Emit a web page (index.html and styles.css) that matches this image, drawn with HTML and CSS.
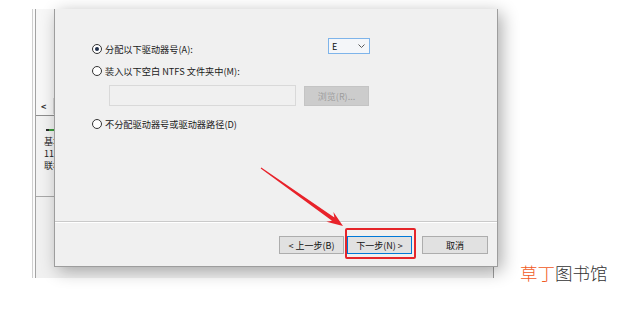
FILE: index.html
```html
<!DOCTYPE html>
<html lang="zh-CN">
<head>
<meta charset="utf-8">
<title>新建简单卷向导</title>
<link rel="stylesheet" href="styles.css">
</head>
<body>
<div class="page">
  <div class="bgwin">
    <div class="bg-inner">
      <div class="bg-top">
        <div class="bg-scroll"><span class="bg-arrow">&lt;</span><span class="bg-thumb"></span></div>
      </div>
      <div class="bg-disk">
        <div class="bg-dash"></div>
        <div class="bg-text">基本<br>11<br>联机</div>
      </div>
      <div class="bg-rest"></div>
    </div>
  </div>

  <div class="dialog">
    <div class="form">
      <div class="row row-first">
        <label class="opt opt-wide"><span class="radio checked"></span><span>分配以下驱动器号(A):</span></label>
        <div class="select"><span>E</span><svg class="chev" width="7" height="4" viewBox="0 0 7 4"><path d="M0.5 0.5 L3.5 3.5 L6.5 0.5" fill="none" stroke="#5a5a5a" stroke-width="1"/></svg></div>
      </div>
      <div class="row row-second">
        <label class="opt"><span class="radio"></span><span>装入以下空白 NTFS 文件夹中(M):</span></label>
      </div>
      <div class="row row-field">
        <div class="field"></div>
        <div class="browse">浏览(R)...</div>
      </div>
      <div class="row row-third">
        <label class="opt"><span class="radio"></span><span>不分配驱动器号或驱动器路径(D)</span></label>
      </div>
    </div>
    <div class="footer">
      <div class="btn btn-back">&lt; 上一步(B)</div>
      <div class="btn btn-next">下一步(N) &gt;</div>
      <div class="btn btn-cancel">取消</div>
    </div>
  </div>

  <svg class="arrow" width="620" height="309" viewBox="0 0 620 309">
    <polygon points="261.3,167.6 334.4,217.5 333.4,211.9 343,226 326.4,221.7 332,220.7 260.7,168.4" fill="#e8222a"/>
  </svg>
  <div class="highlight"></div>
  <div class="watermark"><span class="wm-orange">草丁</span>图书馆</div>
</div>
</body>
</html>
```

FILE: styles.css
```css
html, body {
  margin: 0;
  padding: 0;
  background: #ffffff;
}

.page {
  position: relative;
  width: 620px;
  height: 309px;
  padding-top: 9px;
  box-sizing: border-box;
  overflow: hidden;
  font-family: "Noto Sans CJK SC", "Noto Sans", sans-serif;
  font-size: 9px;
  color: #1a1a1a;
}

/* background window */
.bgwin {
  margin-left: 32px;
  width: 462px;
  height: 269px;
  box-sizing: border-box;
  border-left: 1px solid #cfcfcf;
  border-right: 1px solid #9c9c9c;
  padding-left: 2px;
  background: #fbfbfb;
}

.bg-inner {
  height: 100%;
  border-left: 1px solid #a3a3a3;
  background: #f0f0f0;
  display: flex;
  flex-direction: column;
}

.bg-top {
  height: 106px;
  display: flex;
  flex-direction: column;
  justify-content: flex-end;
  border-bottom: 1px solid #8e8e8e;
  background: #f7f7f7;
}

.bg-scroll {
  height: 18px;
  display: flex;
  align-items: center;
  padding-left: 5px;
}

.bg-arrow {
  font-size: 9px;
  font-weight: bold;
  color: #333;
  width: 7px;
}

.bg-thumb {
  margin-left: 5px;
  width: 12px;
  height: 16px;
  background: #d6d6d6;
}

.bg-disk {
  height: 81px;
  padding: 13px 0 0 8px;
  box-sizing: border-box;
  border-bottom: 1px solid #a8a8a8;
  background: #f2f2f2;
}

.bg-dash {
  width: 12px;
  height: 2px;
  margin-left: 2px;
  background: linear-gradient(90deg, #2b2b2b 0 3px, #3a9a3a 3px);
}

.bg-text {
  margin-top: 5px;
  font-size: 9px;
  line-height: 12px;
  color: #222;
}

.bg-rest {
  flex: 1;
  background: #f0f0f0;
}

/* dialog */
.dialog {
  position: absolute;
  left: 54px;
  top: 9px;
  width: 444px;
  height: 258px;
  box-sizing: border-box;
  background: #f0f0f0;
  border: 1px solid #9d9d9d;
  border-top: none;
  box-shadow: 4px 4px 16px rgba(0, 0, 0, 0.32);
  display: flex;
  flex-direction: column;
}

.form {
  height: 213px;
  box-sizing: border-box;
  padding: 29px 0 0 37px;
  border-bottom: 1px solid #cacaca;
  display: flex;
  flex-direction: column;
}

.row {
  display: flex;
}

.row-first {
  height: 16px;
  align-items: flex-end;
}

.row-second {
  margin-top: 12px;
}

.row-field {
  margin-top: 9px;
  padding-left: 17px;
  align-items: flex-start;
}

.row-third {
  margin-top: 13px;
}

.opt {
  display: flex;
  align-items: center;
  height: 10px;
  line-height: 10px;
  gap: 3px;
  white-space: nowrap;
  font-size: 9.2px;
}

.opt-wide {
  width: 236px;
}

.radio {
  width: 10px;
  height: 10px;
  box-sizing: border-box;
  border: 1px solid #333;
  border-radius: 50%;
  background: #fff;
  display: flex;
  align-items: center;
  justify-content: center;
  flex: none;
}

.radio.checked::after {
  content: "";
  width: 4px;
  height: 4px;
  border-radius: 50%;
  background: #1f2f4a;
}

.select {
  width: 42px;
  height: 16px;
  box-sizing: border-box;
  border: 1px solid #7eb4ea;
  background: #f4f6f9;
  display: flex;
  align-items: center;
  justify-content: space-between;
  padding: 0 4px 0 3px;
  font-size: 9px;
  color: #111;
}

.field {
  width: 187px;
  height: 21px;
  box-sizing: border-box;
  border: 1px solid #d9d9d9;
  background: #f0f0f0;
}

.browse {
  margin-left: 8px;
  margin-top: 1px;
  width: 65px;
  height: 20px;
  box-sizing: border-box;
  border: 1px solid #c4c4c4;
  background: #cccccc;
  color: #9d9d9d;
  display: flex;
  align-items: center;
  justify-content: center;
  font-size: 9px;
}

.footer {
  border-top: 1px solid #ffffff;
  display: flex;
  justify-content: flex-end;
  padding: 13px 9px 0 0;
}

.btn {
  height: 18px;
  width: 65px;
  box-sizing: border-box;
  border: 1px solid #adadad;
  background: #e1e1e1;
  display: flex;
  align-items: center;
  justify-content: center;
  font-size: 9px;
  color: #111;
  white-space: nowrap;
}

.btn-next {
  margin-left: 3px;
  border-color: #0078d7;
}

.btn-cancel {
  margin-left: 10px;
  width: 66px;
}

/* annotations */
.arrow {
  position: absolute;
  left: 0;
  top: 0;
  pointer-events: none;
}

.highlight {
  position: absolute;
  left: 345px;
  top: 228px;
  width: 71px;
  height: 31px;
  box-sizing: border-box;
  border: 2px solid #e5252a;
  border-radius: 2px;
}

.watermark {
  position: absolute;
  left: 520px;
  top: 261px;
  font-size: 17.5px;
  line-height: 24px;
  font-weight: 300;
  color: #333;
  white-space: nowrap;
}

.wm-orange {
  color: #f05a24;
}
```
